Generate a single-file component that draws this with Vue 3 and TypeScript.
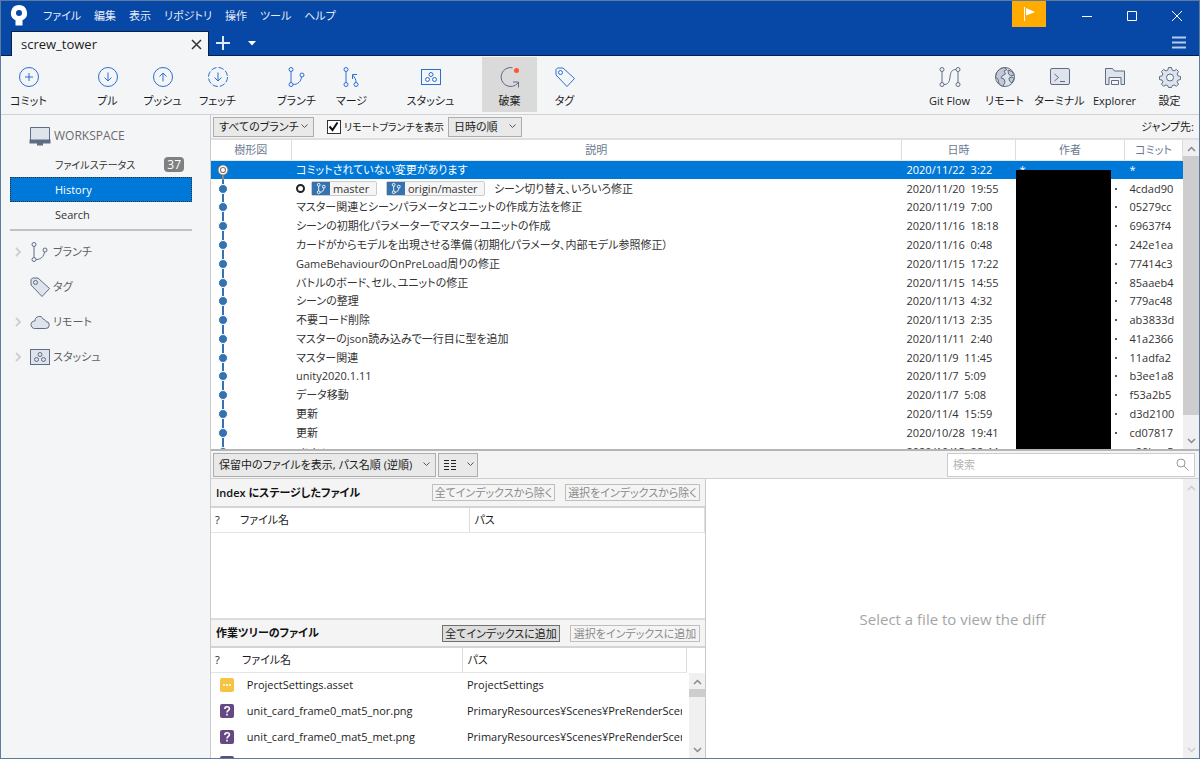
<script setup lang="ts">
import { ref } from 'vue'

interface Commit {
  text: string
  date: string
  hash: string
  refs?: string[]
}

interface Tool {
  icon: string
  label: string
  active?: boolean
}

const menus: string[] = ['ファイル', '編集', '表示', 'リポジトリ', '操作', 'ツール', 'ヘルプ']

const toolGroups: Tool[][] = [
  [{ icon: 'commit', label: 'コミット' }],
  [
    { icon: 'pull', label: 'プル' },
    { icon: 'push', label: 'プッシュ' },
    { icon: 'fetch', label: 'フェッチ' },
  ],
  [
    { icon: 'branch', label: 'ブランチ' },
    { icon: 'merge', label: 'マージ' },
  ],
  [{ icon: 'stash', label: 'スタッシュ' }],
  [
    { icon: 'discard', label: '破棄', active: true },
    { icon: 'tag', label: 'タグ' },
  ],
]

const rightTools: Tool[] = [
  { icon: 'flow', label: 'Git Flow' },
  { icon: 'globe', label: 'リモート' },
  { icon: 'terminal', label: 'ターミナル' },
  { icon: 'folder', label: 'Explorer' },
  { icon: 'gear', label: '設定' },
]

const icons: Record<string, string> = {
  commit: '<circle cx="11" cy="11" r="9.5"/><path d="M11 7v8M7 11h8"/>',
  pull: '<circle cx="11" cy="11" r="9.5"/><path d="M11 6.5v8.5M7.5 11.5l3.5 3.5 3.5-3.5"/>',
  push: '<circle cx="11" cy="11" r="9.5"/><path d="M11 15.5V7M7.5 10.5l3.5-3.5 3.5 3.5"/>',
  fetch:
    '<circle cx="11" cy="11" r="9.5" stroke-dasharray="5.5 2"/><path d="M11 6.5v8.5M7.5 11.5l3.5 3.5 3.5-3.5"/>',
  branch:
    '<circle cx="5" cy="3.5" r="2"/><circle cx="5" cy="18.5" r="2"/><circle cx="16" cy="9" r="2"/><path d="M5 5.5v11M7 18.5c5 0 8-3 8.5-7.5"/>',
  merge:
    '<circle cx="5" cy="3.5" r="2"/><circle cx="5" cy="18.5" r="2"/><circle cx="15" cy="18.5" r="2"/><path d="M5 5.5v11M15 16.5c0-3-1-5-3.500-7.500M11.500 13V8.500h4.500"/>',
  stash:
    '<rect x="1.5" y="3.5" width="19" height="15"/><circle cx="11" cy="8.5" r="2"/><circle cx="7.5" cy="13.5" r="2"/><circle cx="14.5" cy="13.5" r="2"/>',
  discard:
    '<path d="M13.5 1.700A9.500 9.500 0 1 0 19 17"/><path d="M14 16h5.500v5.500"/><circle class="dot" cx="17.500" cy="4.500" r="2.500"/>',
  tag: '<path d="M2 3.5L3.5 2H9l11.500 10.500-7.500 8L2 9z"/><circle cx="6.500" cy="6.500" r="2"/>',
  flow: '<circle cx="3" cy="3.500" r="2"/><circle cx="3" cy="18.500" r="2"/><circle cx="19" cy="3.500" r="2"/><circle cx="19" cy="18.500" r="2"/><path d="M3 5.500v11M19 5.500v11M5 18.500c4 0 5.500-2.500 6-7.500s2-7.500 6-7.500"/>',
  globe:
    '<circle class="tint" cx="11" cy="11" r="9.500"/><path class="deep" d="M3 6l3-3 4-1.500 3 2-3 1.500 1.500 3-3.500 2-1 2 3 1 1 3-2 4.500-4-2.500-1-5-2.500-2zM14 4l4 1.500 2 3.500-3 1-2.500-2zM15 12l3-1 2 1.500-2 4.500-2.500-2z"/>',
  terminal:
    '<rect class="tint" x="1.500" y="2.500" width="19" height="16" rx="1.500"/><path d="M5.500 8l4 3.500-4 3.500M11 15.500h5"/>',
  folder:
    '<path class="tint" d="M1.500 18.500v-16h7l2 2.500h10v13.500h-3.500v-7H5v7z"/><path d="M5 11.500h12M7.500 18.500v-4h7v4z"/>',
  gear: '<path class="tint" d="M9.500 1.500h3l.7 2.600 1.800.8 2.400-1.400 2.100 2.100L18.100 8l.8 1.800 2.600.7v3l-2.600.7-.8 1.600 1.400 2.400-2.100 2.100-2.400-1.400-1.800.8-.7 1.800h-3l-.7-1.800-1.800-.8-2.400 1.400-2.100-2.100 1.400-2.400-.8-1.600-2.600-.7v-3l2.600-.7L3.900 8 2.500 5.600l2.100-2.100L7 4.900l1.800-.8z"/><circle class="hole" cx="11" cy="11.500" r="3.500"/>',
  monitor:
    '<path class="tint" d="M1.500 2.500h19v13h-19z"/><path d="M1.500 15.500h19v2h-19zM8 19.500h6" stroke-width="2"/>',
  cloud:
    '<path class="tint" d="M5.500 17.500h11a3.500 3.500 0 0 0 .5-7c-.5-1.500-1.500-2-2.500-2C13.500 6 11.500 5 9.500 5.500 7 6 6 8 6 10c-2.500 0-4 1.500-4 3.500s1.500 4 3.500 4z"/>',
}

const sections: { icon: string; label: string; open: boolean }[] = [
  { icon: 'branch', label: 'ブランチ', open: true },
  { icon: 'tag', label: 'タグ', open: false },
  { icon: 'cloud', label: 'リモート', open: true },
  { icon: 'stash', label: 'スタッシュ', open: true },
]

const commits: Commit[] = [
  { text: 'コミットされていない変更があります', date: '2020/11/22  3:22', hash: '*' },
  { text: 'シーン切り替え、いろいろ修正', date: '2020/11/20  19:55', hash: '4cdad90', refs: ['master', 'origin/master'] },
  { text: 'マスター関連とシーンパラメータとユニットの作成方法を修正', date: '2020/11/19  7:00', hash: '05279cc' },
  { text: 'シーンの初期化パラメーターでマスターユニットの作成', date: '2020/11/16  18:18', hash: '69637f4' },
  { text: 'カードがからモデルを出現させる準備（初期化パラメータ、内部モデル参照修正）', date: '2020/11/16  0:48', hash: '242e1ea' },
  { text: 'GameBehaviourのOnPreLoad周りの修正', date: '2020/11/15  17:22', hash: '77414c3' },
  { text: 'バトルのボード、セル、ユニットの修正', date: '2020/11/15  14:55', hash: '85aaeb4' },
  { text: 'シーンの整理', date: '2020/11/13  4:32', hash: '779ac48' },
  { text: '不要コード削除', date: '2020/11/13  2:35', hash: 'ab3833d' },
  { text: 'マスターのjson読み込みで一行目に型を追加', date: '2020/11/11  2:40', hash: '41a2366' },
  { text: 'マスター関連', date: '2020/11/9  11:45', hash: '11adfa2' },
  { text: 'unity2020.1.11', date: '2020/11/7  5:09', hash: 'b3ee1a8' },
  { text: 'データ移動', date: '2020/11/7  5:08', hash: 'f53a2b5' },
  { text: '更新', date: '2020/11/4  15:59', hash: 'd3d2100' },
  { text: '更新', date: '2020/10/28  19:41', hash: 'cd07817' },
  { text: 'gitdot', date: '2020/10/15  22:44', hash: 'e20bae5' },
]

const files: { kind: string; name: string; path: string }[] = [
  { kind: 'modified', name: 'ProjectSettings.asset', path: 'ProjectSettings' },
  { kind: 'unknown', name: 'unit_card_frame0_mat5_nor.png', path: 'PrimaryResources¥Scenes¥PreRenderScene' },
  { kind: 'unknown', name: 'unit_card_frame0_mat5_met.png', path: 'PrimaryResources¥Scenes¥PreRenderScene' },
  { kind: 'unknown', name: 'unit_card_frame0_mat5_bd.png', path: 'PrimaryResources¥Scenes¥PreRenderScene' },
]

const showRemote = ref(true)
const query = ref('')
</script>

<template>
  <div class="window">
    <header class="titlebar">
      <svg class="logo" width="18" height="22" viewBox="0 0 18 22" aria-hidden="true">
        <path fill="#fff" fill-rule="evenodd" d="M9 0a8 8 0 0 1 3.500 15.200V20.500h-7V15.200A8 8 0 0 1 9 0zM9 5a3 3 0 1 0 0 6 3 3 0 0 0 0-6z" />
      </svg>
      <nav class="menus">
        <button v-for="m in menus" :key="m" type="button">{{ m }}</button>
      </nav>
      <button class="flag" type="button" aria-label="通知">
        <svg width="14" height="16" viewBox="0 0 14 16"><path d="M2.500 1v14" stroke="#fff" fill="none" /><path d="M4 2l9 4-9 3.500z" fill="#fff" /></svg>
      </button>
      <div class="winbtns">
        <button type="button" aria-label="最小化"><svg width="12" height="12" viewBox="0 0 12 12"><path d="M1 6.500h10" /></svg></button>
        <button type="button" aria-label="最大化"><svg width="12" height="12" viewBox="0 0 12 12"><path d="M1.500 1.500h9v9h-9z" /></svg></button>
        <button type="button" aria-label="閉じる"><svg width="12" height="12" viewBox="0 0 12 12"><path d="M1 1l10 10M11 1L1 11" /></svg></button>
      </div>
    </header>

    <div class="tabs">
      <div class="tab">
        <span>screw_tower</span>
        <button type="button" aria-label="タブを閉じる"><svg width="11" height="11" viewBox="0 0 11 11"><path d="M1 1l9 9M10 1l-9 9" stroke="#333" stroke-width="1.500" fill="none" /></svg></button>
      </div>
      <button class="plus" type="button" aria-label="新しいタブ"><svg width="14" height="14" viewBox="0 0 14 14"><path d="M7 0v14M0 7h14" stroke="#dfe8f6" stroke-width="2" fill="none" /></svg></button>
      <button class="more" type="button" aria-label="タブ一覧"><svg width="8" height="5" viewBox="0 0 8 5"><path d="M0 0h8L4 4.500z" fill="#fff" /></svg></button>
      <button class="burger" type="button" aria-label="メニュー"><svg width="14" height="13" viewBox="0 0 14 13"><path d="M0 1.500h14M0 6.500h14M0 11.500h14" stroke="#b9cbe8" stroke-width="2" /></svg></button>
    </div>

    <div class="toolbar">
      <div v-for="(g, i) in toolGroups" :key="i" class="group">
        <button v-for="t in g" :key="t.label" type="button" class="tool" :class="{ active: t.active }">
          <svg class="ico blue" :class="t.icon" width="22" height="22" viewBox="0 0 22 22" v-html="icons[t.icon]" />
          <span>{{ t.label }}</span>
        </button>
      </div>
      <div class="group right">
        <button v-for="t in rightTools" :key="t.label" type="button" class="tool">
          <svg class="ico gray" width="22" height="22" viewBox="0 0 22 22" v-html="icons[t.icon]" />
          <span>{{ t.label }}</span>
        </button>
      </div>
    </div>

    <div class="body">
      <aside class="sidebar">
        <div class="ws-title">
          <svg class="ico gray" width="22" height="22" viewBox="0 0 22 22" v-html="icons.monitor" />
          <span>WORKSPACE</span>
        </div>
        <nav class="ws-items">
          <a href="#status" class="status">ファイルステータス<b>37</b></a>
          <a href="#history" class="selected">History</a>
          <a href="#search">Search</a>
        </nav>
        <button v-for="s in sections" :key="s.label" type="button" class="section">
          <svg class="chev" width="6" height="10" viewBox="0 0 6 10"><path v-if="s.open" d="M1 1l4 4-4 4" /></svg>
          <svg class="ico gray side" :class="s.icon" width="22" height="22" viewBox="0 0 22 22" v-html="icons[s.icon]" />
          <span>{{ s.label }}</span>
        </button>
      </aside>

      <main class="main">
        <div class="filters">
          <div class="pick w100">
            <select aria-label="ブランチの範囲"><option>すべてのブランチ</option></select>
            <svg width="7" height="5" viewBox="0 0 7 5"><path d="M.5.5l3 3 3-3" /></svg>
          </div>
          <label class="check">
            <span class="box">
              <input v-model="showRemote" type="checkbox" />
              <svg v-if="showRemote" width="13" height="13" viewBox="0 0 13 13"><path d="M2.500 6.500l3 3.500 5-7.500" /></svg>
            </span>
            リモートブランチを表示
          </label>
          <div class="pick w73">
            <select aria-label="並び順"><option>日時の順</option></select>
            <svg width="7" height="5" viewBox="0 0 7 5"><path d="M.5.5l3 3 3-3" /></svg>
          </div>
          <span class="jump">ジャンプ先:</span>
        </div>

        <section class="history">
          <div class="log">
            <table>
              <colgroup>
                <col class="c-graph" /><col /><col class="c-date" /><col class="c-author" /><col class="c-hash" />
              </colgroup>
              <thead>
                <tr><th>樹形図</th><th>説明</th><th>日時</th><th>作者</th><th>コミット</th></tr>
              </thead>
              <tbody>
                <tr v-for="(c, i) in commits" :key="i" :class="{ current: i === 0 }">
                  <td class="graph">
                    <svg width="24" height="18" viewBox="0 0 24 18">
                      <template v-if="i === 0">
                        <path d="M12 14v5" stroke="#8a8a8a" stroke-width="2" />
                        <circle cx="12" cy="9" r="5.500" fill="#777" />
                        <circle cx="12" cy="9" r="3.800" fill="#777" stroke="#fff" stroke-width="1.400" />
                        <circle cx="12" cy="9" r="2" fill="#fff" />
                      </template>
                      <template v-else>
                        <path d="M12 0v19" stroke="#3572b0" stroke-width="2" />
                        <circle cx="12" cy="9" r="4.500" fill="#3572b0" stroke="#fff" stroke-width="1" />
                      </template>
                    </svg>
                  </td>
                  <td class="desc">
                    <div class="line">
                      <template v-if="c.refs">
                        <i class="head"></i>
                        <span v-for="r in c.refs" :key="r" class="ref" :class="{ wide: r.includes('/') }">
                          <svg width="18" height="14" viewBox="0 0 18 14">
                            <g fill="none" stroke="#fff"><circle cx="6.500" cy="3" r="1.500" /><circle cx="6.500" cy="11" r="1.500" /><circle cx="12" cy="5" r="1.500" /><path d="M6.500 4.500v5M8 11c2.500 0 4-2 4-4.500" /></g>
                          </svg>
                          <em>{{ r }}</em>
                        </span>
                      </template>
                      <span>{{ c.text }}</span>
                    </div>
                  </td>
                  <td class="date">{{ c.date }}</td>
                  <td class="author">{{ i === 0 ? '*' : '' }}<i v-if="i > 0"></i></td>
                  <td class="hash">{{ c.hash }}</td>
                </tr>
              </tbody>
            </table>
            <div class="mask"></div>
          </div>
          <div class="bar">
            <svg width="9" height="6" viewBox="0 0 9 6"><path d="M1 5l3.500-3.500L8 5" /></svg>
            <div class="thumb tall"></div>
            <svg width="9" height="6" viewBox="0 0 9 6"><path d="M1 1l3.500 3.500L8 1" /></svg>
          </div>
        </section>

        <div class="pending">
          <div class="pick w223">
            <select aria-label="ファイルの表示"><option>保留中のファイルを表示, パス名順 (逆順)</option></select>
            <svg width="7" height="5" viewBox="0 0 7 5"><path d="M.5.5l3 3 3-3" /></svg>
          </div>
          <button class="pick view" type="button" aria-label="表示形式">
            <svg width="12" height="10" viewBox="0 0 12 10"><path d="M0 .5h5M7 .5h5M0 3.500h5M7 3.500h5M0 6.500h5M7 6.500h5M0 9.500h5M7 9.500h5" stroke="#222" /></svg>
            <svg width="7" height="5" viewBox="0 0 7 5"><path d="M.5.5l3 3 3-3" /></svg>
          </button>
          <div class="search">
            <input v-model="query" type="text" placeholder="検索" aria-label="検索" />
            <svg width="13" height="13" viewBox="0 0 13 13"><circle cx="5" cy="5" r="4" /><path d="M8 8l4.500 4.500" /></svg>
          </div>
        </div>

        <div class="split">
          <div class="left">
            <div class="panel-head">
              <strong>Index にステージしたファイル</strong>
              <button type="button" disabled class="w123">全てインデックスから除く</button>
              <button type="button" disabled class="w135">選択をインデックスから除く</button>
            </div>
            <div class="files staged">
              <table>
                <colgroup><col class="s-name" /><col /></colgroup>
                <thead><tr><th><i>?</i>ファイル名</th><th>パス</th></tr></thead>
              </table>
            </div>
            <div class="panel-head second">
              <strong>作業ツリーのファイル</strong>
              <button type="button" class="w118">全てインデックスに追加</button>
              <button type="button" disabled class="w130">選択をインデックスに追加</button>
            </div>
            <div class="files work">
              <table>
                <colgroup><col class="w-name" /><col /><col class="w-end" /></colgroup>
                <thead><tr><th><i>?</i>ファイル名</th><th>パス</th><th></th></tr></thead>
                <tbody>
                  <tr v-for="f in files" :key="f.name">
                    <td>
                      <div class="fname">
                        <svg width="14" height="14" viewBox="0 0 14 14">
                          <rect width="14" height="14" rx="2" :fill="f.kind === 'modified' ? '#f6c342' : '#654982'" />
                          <path v-if="f.kind === 'modified'" d="M3 7h2M6 7h2M9 7h2" stroke="#fff" stroke-width="1.500" />
                          <path v-else d="M4.800 5c0-3 4.600-3 4.600-.3C9.400 6.500 7 6.300 7 8.600M7 9.800v1.700" stroke="#fff" stroke-width="1.600" fill="none" />
                        </svg>
                        {{ f.name }}
                      </div>
                    </td>
                    <td><div class="path">{{ f.path }}</div></td>
                    <td></td>
                  </tr>
                </tbody>
              </table>
              <div class="bar small">
                <svg width="9" height="6" viewBox="0 0 9 6"><path d="M1 5l3.500-3.500L8 5" /></svg>
                <div class="thumb short"></div>
                <svg width="9" height="6" viewBox="0 0 9 6"><path d="M1 1l3.500 3.500L8 1" /></svg>
              </div>
            </div>
          </div>
          <div class="diff"><p>Select a file to view the diff</p></div>
          <div class="bar faint">
            <svg width="9" height="6" viewBox="0 0 9 6"><path d="M1 5l3.500-3.500L8 5" /></svg>
            <svg width="9" height="6" viewBox="0 0 9 6"><path d="M1 1l3.500 3.500L8 1" /></svg>
          </div>
        </div>
      </main>
    </div>
  </div>
</template>

<style>
body {
  margin: 0;
}
</style>

<style scoped>
* {
  box-sizing: border-box;
}
.window {
  display: flex;
  flex-direction: column;
  height: 100vh;
  overflow: hidden;
  border: 1px solid #5b7b9f;
  background: #fff;
  color: #1c1c1c;
  font: 11px/18px "Open Sans", "Noto Sans CJK JP", sans-serif;
  font-feature-settings: "palt";
}
button,
input,
select {
  margin: 0;
  padding: 0;
  border: 0;
  background: none;
  color: inherit;
  font: inherit;
  font-feature-settings: inherit;
}
svg {
  display: block;
  flex: none;
}
table {
  width: 100%;
  border-collapse: collapse;
  table-layout: fixed;
}
th {
  font-weight: 400;
}
th,
td {
  padding: 0;
  overflow: hidden;
  white-space: pre;
}

/* title bar and tabs */
.titlebar {
  display: flex;
  flex: none;
  height: 30px;
  background: #0747a6;
  color: #e6edf8;
}
.logo {
  margin: 4px 0 0 9px;
}
.menus {
  display: flex;
  gap: 13px;
  margin-left: 15px;
}
.flag {
  display: grid;
  place-items: center;
  width: 34px;
  height: 26px;
  margin-left: auto;
  background: #ffab00;
}
.winbtns {
  display: flex;
  margin-left: 18px;
}
.winbtns button {
  display: grid;
  place-items: center;
  width: 45px;
}
.winbtns path {
  fill: none;
  stroke: #fff;
}
.tabs {
  display: flex;
  flex: none;
  align-items: center;
  height: 25px;
  padding-left: 10px;
  border-bottom: 1px solid #0a1f45;
  background: #0747a6;
}
.tab {
  display: flex;
  align-items: center;
  justify-content: space-between;
  width: 198px;
  height: 25px;
  padding: 0 6px 0 9px;
  border: 1px solid #0a1f45;
  border-bottom: 0;
  margin-bottom: -1px;
  background: #f4f5f7;
  font-size: 13px;
}
.plus {
  margin-left: 7px;
}
.more {
  margin-left: 18px;
}
.burger {
  margin: 0 13px 2px auto;
}

/* toolbar */
.toolbar {
  display: flex;
  flex: none;
  gap: 24px;
  height: 59px;
  padding: 1px 2px 2px 0;
  border-bottom: 1px solid #cfd1d4;
  background: #f4f5f7;
}
.group {
  display: flex;
}
.group.right {
  margin-left: auto;
}
.tool {
  display: flex;
  flex-direction: column;
  align-items: center;
  gap: 4px;
  width: 55px;
  padding-top: 9px;
  white-space: nowrap;
}
.tool.active {
  background: #dadada;
}
.ico {
  fill: none;
  stroke: #2a6fd3;
}
.ico.gray,
.ico.discard {
  stroke: #5e6c84;
}
.ico :deep(.dot) {
  fill: #ff5630;
  stroke: none;
}
.ico :deep(.tint),
.side.tag :deep(path),
.side.stash :deep(rect) {
  fill: #dfe3eb;
}
.ico :deep(.deep) {
  fill: #c3cad6;
}
.ico :deep(.hole) {
  fill: #f4f5f7;
}

/* sidebar */
.body {
  display: flex;
  flex: 1;
  min-height: 0;
}
.sidebar {
  display: flex;
  flex: none;
  flex-direction: column;
  width: 210px;
  padding: 9px 18px 0 9px;
  border-right: 1px solid #c9cbce;
  background: #f4f5f7;
}
.ws-title {
  display: flex;
  align-items: center;
  gap: 3px;
  height: 24px;
  padding-left: 19px;
  color: #6a6a6a;
  font-size: 12px;
}
.ws-items {
  display: flex;
  flex-direction: column;
  padding: 4px 0 2px;
  border-bottom: 2px solid #bfc1c3;
  margin-bottom: 3px;
}
.ws-items a {
  display: flex;
  align-items: center;
  justify-content: space-between;
  height: 25px;
  padding: 0 7px 0 44px;
  border: 1px solid transparent;
  color: #333;
  text-decoration: none;
}
.ws-items .status {
  font-size: 10px;
}
.ws-items .selected {
  border: 1px dotted #333;
  background: #0078d7;
  color: #fff;
}
.ws-items b {
  padding: 0 3px;
  border-radius: 4px;
  background: #808080;
  color: #fff;
  font-weight: 400;
  font-size: 12px;
  line-height: 15px;
}
.section {
  display: flex;
  align-items: center;
  height: 35px;
  padding-left: 5px;
  color: #606060;
  font-size: 11px;
}
.section .ico {
  margin: 0 2px 0 8px;
}
.chev {
  fill: none;
  stroke: #d0d0d0;
  stroke-width: 2;
}

/* filter bar */
.main {
  display: flex;
  flex: 1;
  flex-direction: column;
  min-width: 0;
}
.filters {
  display: flex;
  flex: none;
  align-items: center;
  height: 25px;
  padding: 0 5px 0 2px;
  border-bottom: 2px solid #dfdfdf;
  background: #f4f4f4;
}
.pick {
  position: relative;
  display: flex;
  align-items: center;
  height: 20px;
  border: 1px solid #adadad;
  background: #e9e9e9;
}
.pick select {
  width: 100%;
  height: 100%;
  padding: 0 14px 0 5px;
  appearance: none;
}
.pick select + svg {
  position: absolute;
  right: 5px;
}
.pick svg {
  fill: none;
  stroke: #555;
}
.w100 {
  width: 101px;
}
.w73 {
  width: 74px;
}
.w223 {
  width: 223px;
}
.check {
  display: flex;
  align-items: center;
  gap: 3px;
  margin: 0 4px 0 13px;
  font-size: 10px;
}
.box {
  display: grid;
}
.box > * {
  grid-area: 1 / 1;
}
.box input {
  width: 14px;
  height: 14px;
  border: 1px solid #333;
  background: #fff;
  appearance: none;
}
.box svg {
  fill: none;
  stroke: #111;
  stroke-width: 2;
  pointer-events: none;
}
.jump {
  margin-left: auto;
}

/* commit log */
.history {
  display: flex;
  flex: none;
  height: 309px;
}
.log {
  position: relative;
  flex: 1;
  overflow: hidden;
}
.log table {
  height: 321px;
}
.log th {
  height: 20px;
  border-right: 1px solid #dedede;
  border-bottom: 1px solid #e5e5e5;
  color: #6b7a90;
}
.log td {
  color: #333;
}
.log .current td {
  background: #0078d7;
  color: #fff;
}
.c-graph {
  width: 80px;
}
.c-date {
  width: 114px;
}
.c-author {
  width: 109px;
}
.c-hash {
  width: 58px;
}
.graph,
.graph svg {
  overflow: visible;
}
.line {
  display: flex;
  align-items: center;
  padding-left: 5px;
}
.head {
  width: 9px;
  height: 9px;
  margin-right: 6px;
  border: 2px solid #222;
  border-radius: 50%;
}
.ref {
  display: flex;
  width: 66px;
  height: 15px;
  margin-right: 9px;
  border: 1px solid #ccc;
  border-radius: 2px;
  background: #f5f5f5;
  line-height: 13px;
}
.ref.wide {
  width: 99px;
}
.ref svg {
  height: 13px;
  background: #3572b0;
}
.ref em {
  padding-left: 3px;
  font-style: normal;
}
.date {
  padding-left: 5px;
}
.author {
  padding-left: 4px;
}
.author i {
  display: block;
  width: 2px;
  height: 2px;
  margin: 0 8px 0 auto;
  background: #555;
}
.hash {
  padding-left: 5px;
}
.mask {
  position: absolute;
  top: 30px;
  right: 72px;
  bottom: 0;
  width: 95px;
  background: #000;
}
.bar {
  display: flex;
  flex: none;
  flex-direction: column;
  align-items: center;
  justify-content: space-between;
  width: 16px;
  padding: 6px 0 5px;
  background: #f0f0f0;
}
.bar svg {
  fill: none;
  stroke: #888;
  stroke-width: 1.5;
}
.thumb {
  width: 100%;
  background: #cdcdcd;
}
.thumb.tall {
  flex: 1;
  margin: 4px 0 23px;
}
.thumb.short {
  height: 8px;
  margin: 4px 0 auto;
}
.bar.faint svg {
  stroke: #ccc;
}

/* pending files bar */
.pending {
  display: flex;
  flex: none;
  align-items: center;
  gap: 2px;
  height: 30px;
  padding: 0 4px 0 2px;
  border-top: 2px solid #b5b5b5;
  border-bottom: 1px solid #d0d0d0;
  background: #f4f4f4;
}
.pending .pick {
  height: 24px;
}
.pending .view {
  gap: 11px;
  width: 40px;
  padding-left: 5px;
}
.search {
  display: flex;
  align-items: center;
  width: 248px;
  height: 24px;
  padding: 0 5px;
  border: 1px solid #ccc;
  margin-left: auto;
  background: #fff;
}
.search input {
  flex: 1;
  min-width: 0;
  outline: 0;
}
.search input::placeholder {
  color: #b5b5b5;
}
.search svg {
  fill: none;
  stroke: #999;
}

/* file lists and diff */
.split {
  display: flex;
  flex: 1;
  min-height: 0;
}
.left {
  display: flex;
  flex: none;
  flex-direction: column;
  width: 495px;
  border-right: 1px solid #c9c9c9;
}
.panel-head {
  display: flex;
  flex: none;
  align-items: center;
  gap: 10px;
  height: 29px;
  padding: 0 5px;
  border-bottom: 2px solid #d4d4d4;
  background: #f4f4f4;
}
.panel-head.second {
  border-top: 2px solid #dcdcdc;
  height: 30px;
}
.panel-head strong {
  margin-right: auto;
  color: #111;
  font-weight: 600;
}
.panel-head button {
  height: 17px;
  border: 1px solid #707070;
  background: #ddd;
  line-height: 15px;
  white-space: nowrap;
}
.panel-head button:disabled {
  border-color: #bfbfbf;
  background: #f4f4f4;
  color: #8a8a8a;
}
.w118 {
  width: 118px;
}
.w123 {
  width: 123px;
}
.w130 {
  width: 130px;
}
.w135 {
  width: 135px;
}
.files {
  position: relative;
  overflow: hidden;
}
.staged {
  flex: none;
  height: 110px;
}
.work {
  flex: 1;
}
.files th {
  height: 24px;
  padding-left: 5px;
  border-right: 1px solid #dedede;
  border-bottom: 1px solid #e5e5e5;
  text-align: left;
}
.files th i {
  display: inline-block;
  width: 25px;
  font-style: normal;
}
.work th i {
  width: 27px;
}
.files th:first-child {
  padding-left: 4px;
}
.s-name {
  width: 258px;
}
.w-name {
  width: 251px;
}
.w-end {
  width: 19px;
}
.work th:last-child {
  border: 0;
}
.files td {
  height: 26px;
}
.fname {
  display: flex;
  align-items: center;
  gap: 10px;
  padding-left: 9px;
}
.path {
  margin: 0 4px 0 5px;
  overflow: hidden;
}
.bar.small {
  position: absolute;
  top: 25px;
  right: 0;
  bottom: 0;
}
.diff {
  display: grid;
  flex: 1;
  place-items: center;
  padding-left: 16px;
}
.diff p {
  margin: 0;
  color: #a5a5a5;
  font-size: 15px;
}
</style>
